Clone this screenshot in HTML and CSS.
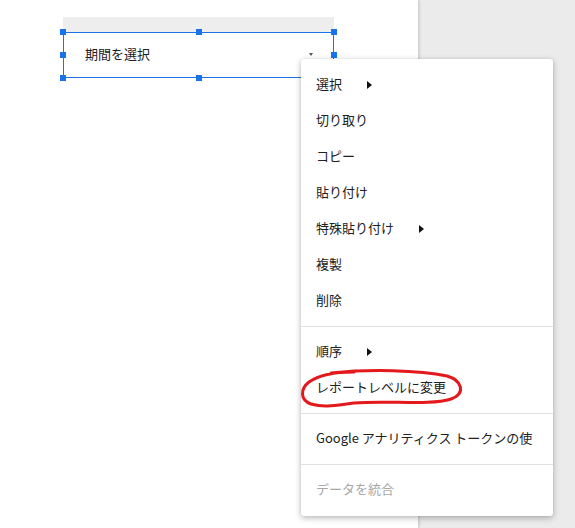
FILE: index.html
```html
<!DOCTYPE html>
<html lang="ja">
<head>
<meta charset="utf-8">
<link rel="stylesheet" href="styles.css">
</head>
<body>
<div class="page">
  <div class="canvas">
    <div class="widget">
      <div class="band"></div>
      <div class="control">
        <span class="label">期間を選択</span>
        <span class="caret"></span>
        <span class="h h-tl"></span><span class="h h-tm"></span><span class="h h-tr"></span>
        <span class="h h-ml"></span><span class="h h-mr"></span>
        <span class="h h-bl"></span><span class="h h-bm"></span><span class="h h-br"></span>
      </div>
    </div>
  </div>
  <div class="side"></div>

  <div class="menu">
    <div class="item">選択<span class="sub"></span></div>
    <div class="item">切り取り</div>
    <div class="item">コピー</div>
    <div class="item">貼り付け</div>
    <div class="item">特殊貼り付け<span class="sub"></span></div>
    <div class="item">複製</div>
    <div class="item">削除</div>
    <div class="sep"></div>
    <div class="item">順序<span class="sub"></span></div>
    <div class="item">レポートレベルに変更</div>
    <div class="sep"></div>
    <div class="item">Google アナリティクス トークンの使</div>
    <div class="sep"></div>
    <div class="item disabled">データを統合</div>
  </div>

  <svg class="circle" width="168" height="44" viewBox="0 0 168 44">
    <path d="M32 6 C70 2 120 3 148 9 C162 13 168 26 152 32 C130 39 90 33 55 36 C38 38 26 41 12 37 C1 33 1 22 10 15 C20 8 35 5 55 5"
      fill="none" stroke="#e3191c" stroke-width="3" stroke-linecap="round" stroke-linejoin="round"/>
  </svg>
</div>
</body>
</html>
```

FILE: styles.css
```css
* { box-sizing: border-box; }
html, body { margin: 0; padding: 0; }
body {
  font-family: "Noto Sans CJK JP", "Noto Sans", sans-serif;
  font-size: 13px;
  color: #202124;
}
.page {
  position: relative;
  width: 575px;
  height: 528px;
  display: flex;
  overflow: hidden;
}
.canvas {
  width: 418px;
  height: 528px;
  background: #fff;
  box-shadow: 1px 0 3px rgba(0,0,0,0.18);
  padding: 17px 0 0 63px;
  position: relative;
  z-index: 1;
}
.side {
  flex: 1;
  background: #ebebeb;
}
.widget { width: 271px; }
.band {
  height: 15px;
  background: #eeeeee;
}
.control {
  position: relative;
  height: 46px;
  border: 1px solid #1a73e8;
  background: #fff;
  display: flex;
  align-items: center;
  justify-content: space-between;
  padding: 0 20px 3px 21px;
}
.label { line-height: 16px; }
.caret {
  width: 0; height: 0;
  margin-top: 2px;
  border-left: 2.5px solid transparent;
  border-right: 2.5px solid transparent;
  border-top: 3px solid #555;
}
.h {
  position: absolute;
  width: 6px; height: 6px;
  background: #1a73e8;
}
.h-tl { left: -4px; top: -4px; }
.h-tm { left: 132px; top: -4px; }
.h-tr { right: -4px; top: -4px; }
.h-ml { left: -4px; top: 19px; }
.h-mr { right: -4px; top: 19px; }
.h-bl { left: -4px; bottom: -4px; }
.h-bm { left: 132px; bottom: -4px; }
.h-br { right: -4px; bottom: -4px; }

.menu {
  position: absolute;
  left: 301px;
  top: 59px;
  width: 252px;
  padding: 8px 0;
  background: #fff;
  border-radius: 3px;
  box-shadow: 0 2px 6px rgba(0,0,0,0.28), 0 0 2px rgba(0,0,0,0.08);
  z-index: 2;
}
.item {
  height: 36px;
  display: flex;
  align-items: center;
  padding: 0 0 2px 15px;
  line-height: 16px;
  white-space: nowrap;
}
.item.disabled { color: #a8a8a8; }
.sub {
  margin-left: 25px;
  margin-top: 1px;
  width: 0; height: 0;
  border-top: 4px solid transparent;
  border-bottom: 4px solid transparent;
  border-left: 5px solid #111;
}
.sep {
  height: 1px;
  background: #e0e0e0;
  margin: 7px 0;
}
.circle {
  position: absolute;
  left: 299px;
  top: 367px;
  z-index: 3;
}
```
